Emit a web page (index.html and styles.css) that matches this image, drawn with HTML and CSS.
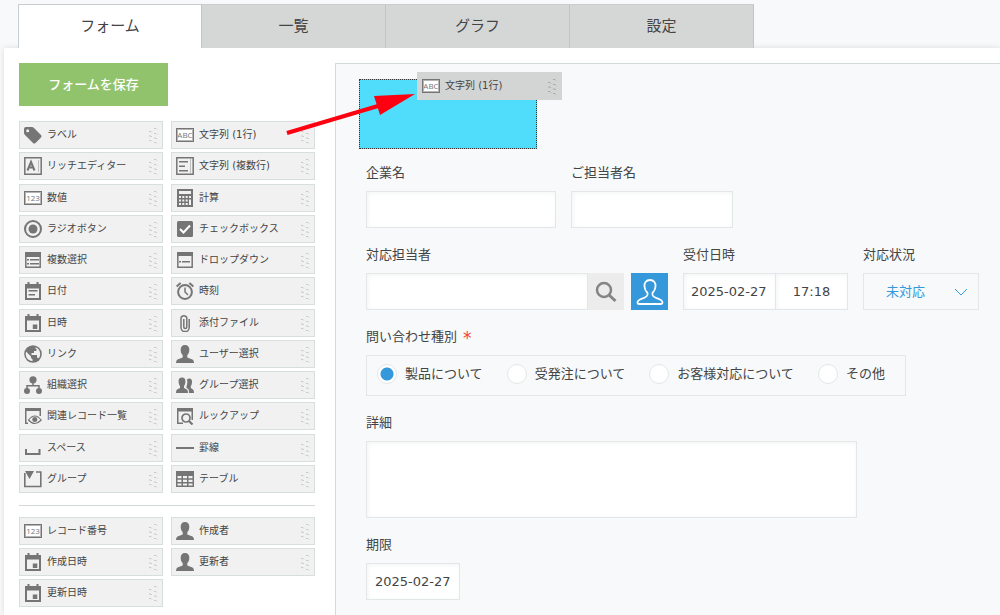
FILE: index.html
```html
<!DOCTYPE html>
<html lang="ja">
<head>
    <meta charset="UTF-8">
    <meta name="viewport" content="width=device-width, initial-scale=1.0">
    <title>フォーム</title>
    <link rel="stylesheet" href="styles.css">
</head>
<body>
    <!-- icon sprite -->
    <svg class="sprite" aria-hidden="true">
        <symbol id="grip" viewBox="0 0 14 22">
            <g fill="none" stroke="currentColor" stroke-width="1">
                <path d="M2 7.500h2l1 1M2 12h2l1 1M2 16.500h2l1 1"/>
                <path d="M7 4.500h2l1 1M7 9.500h2l1 1M7 14h2l1 1M7 18.500h2l1 1"/>
            </g>
        </symbol>
        <symbol id="i-tag" viewBox="0 0 18 18">
            <path fill-rule="evenodd" d="M0 3Q0 1 2 1L8 1Q9 1 10 2L17 9Q18 10 17 11.500L11.500 17Q10 18 9 17L1 9Q0 8 0 7ZM3.700 3.200A1.500 1.500 0 1 0 3.700 6.200A1.500 1.500 0 1 0 3.700 3.200Z"/>
        </symbol>
        <symbol id="i-rich" viewBox="0 0 18 18">
            <path fill="none" stroke="currentColor" stroke-width="1.500" d="M.8.8h16.400v16.400H.8z"/>
            <path fill="none" stroke="currentColor" stroke-width="2" d="M3.500 13.500L7 5l3.500 8.500M5 10.500h4"/>
            <path opacity=".4" d="M14 3h1v12h-1z"/>
        </symbol>
        <symbol id="i-multi" viewBox="0 0 18 18">
            <path fill="none" stroke="currentColor" stroke-width="1.500" d="M.8.8h16.400v16.400H.8z"/>
            <path d="M3 4h9v1.500H3zM3 8.500h6V10H3zM3 13h9v1.500H3z"/>
            <path opacity=".4" d="M14 2h1v14h-1z"/>
        </symbol>
        <symbol id="i-calc" viewBox="0 0 18 18">
            <path fill-rule="evenodd" d="M1 0h16v18H1zM3 2v3h12V2zM3 7v2h2V7zM6.300 7v2h2V7zM9.700 7v2h2V7zM13 7v2h2V7zM3 10.500v2h2v-2zM6.300 10.500v2h2v-2zM9.700 10.500v2h2v-2zM3 14v2h2v-2zM6.300 14v2h2v-2zM9.700 14v2h2v-2zM13 10.500V16h2v-5.500z"/>
        </symbol>
        <symbol id="i-radio" viewBox="0 0 18 18">
            <circle cx="9" cy="9" r="8" fill="none" stroke="currentColor" stroke-width="2"/>
            <circle cx="9" cy="9" r="4.500"/>
        </symbol>
        <symbol id="i-check" viewBox="0 0 18 18">
            <rect x="1" y="1" width="16" height="16" rx="1.500"/>
            <path fill="none" stroke="#fff" stroke-width="2" d="M4 9l3.500 3.500L14 5.500"/>
        </symbol>
        <symbol id="i-list" viewBox="0 0 18 18">
            <path fill="none" stroke="currentColor" stroke-width="1.500" d="M1.800 1.800h14.400v14.400H1.800z"/>
            <path d="M1 1h16v5H1zM3 8h2v1.500H3zM6 8h9v1.500H6zM3 12h2v1.500H3zM6 12h9v1.500H6z"/>
        </symbol>
        <symbol id="i-drop" viewBox="0 0 18 18">
            <path fill="none" stroke="currentColor" stroke-width="1.500" d="M1.800 1.800h14.400v14.400H1.800z"/>
            <path d="M1 1h16v4H1zM3 10h2v1.500H3zM6 10h8v1.500H6z"/>
        </symbol>
        <symbol id="i-date" viewBox="0 0 18 18">
            <path fill-rule="evenodd" d="M3.500 0h2v2h7V0h2v2H17v16H1V2h2.500zM3 6.500V16h12V6.500zM4.500 8h9v1.500h-9zM4.500 12H11v1.500H4.500z"/>
        </symbol>
        <symbol id="i-datetime" viewBox="0 0 18 18">
            <path fill-rule="evenodd" d="M3.500 0h2v2h7V0h2v2H17v16H1V2h2.500zM3 6.500V16h12V6.500zM8.800 10.500h4.500V15H8.800z"/>
        </symbol>
        <symbol id="i-clock" viewBox="0 0 18 18">
            <g fill="none" stroke="currentColor" stroke-width="2">
                <circle cx="9" cy="10" r="6.900"/>
                <path stroke-width="1.500" d="M9 5.500V10l3 3"/>
                <path d="M.6 4.500L4.600 1M17.400 4.500L13.400 1"/>
            </g>
        </symbol>
        <symbol id="i-clip" viewBox="0 0 18 18">
            <path fill="none" stroke="currentColor" stroke-width="1.500" d="M13.200 5v8.500a4 4 0 0 1-8.200 0V4a3 3 0 0 1 5.800 0v9a1.500 1.500 0 0 1-3 0V5"/>
        </symbol>
        <symbol id="i-globe" viewBox="0 0 18 18">
            <circle cx="9" cy="9" r="8.800"/>
            <path fill="#f1f1f1" d="M2 6.500L7 11.500V13l1.500 1.200v2Q3 15.500 2 11Q1.500 8.500 2 6.500ZM11.500 2.200Q16 4 16.200 9Q16 11.500 15 13.200L13 12.500V10H7.500V8H10V6h2Q13 5.500 12.500 4L11.500 3.500Z"/>
        </symbol>
        <symbol id="i-user" viewBox="0 0 18 18">
            <path d="M9 0C12 0 13.500 2 13.300 5C13.200 7.500 12.500 9 11.300 10V12.500L16.500 14.500Q18 15.200 18 18H0Q0 15.200 1.500 14.500L6.700 12.500V10C5.500 9 4.800 7.500 4.700 5C4.500 2 6 0 9 0Z"/>
        </symbol>
        <symbol id="i-org" viewBox="0 0 18 18">
            <circle cx="9" cy="3.800" r="3.600"/>
            <circle cx="3" cy="15" r="3"/>
            <circle cx="15" cy="15" r="3"/>
            <path fill="none" stroke="currentColor" stroke-width="1.500" d="M9 6v3.500M3 13V9.800h12V13"/>
        </symbol>
        <symbol id="i-group-user" viewBox="0 0 18 18">
            <path d="M6 1.500C8.500 1.500 9.500 3 9.400 5.500C9.300 7.500 8.800 9 8 10V12L11 13.500Q12 14 12 17H0Q0 14 1 13.500L4 12V10C3.200 9 2.700 7.500 2.600 5.500C2.500 3 3.500 1.500 6 1.500Z"/>
            <path d="M11 3.500Q12 2.500 13.300 2.500C15.500 2.500 16.300 4.500 16 6.500Q15.800 9 14.800 10V12L17 13.500Q18 14 18 17H13Q13.200 13.500 12 12.800L10.500 12V10.500Q11.500 8 11.300 5.500Z"/>
        </symbol>
        <symbol id="i-related" viewBox="0 0 18 18">
            <path d="M1 1h16v3H1zM1 1h1.500v16H1zM1 15.500h3V17H1zM15.500 1H17v8h-1.500z"/>
            <path fill="none" stroke="currentColor" stroke-width="1.200" d="M4.500 13Q10.800 5 17.200 13Q10.800 20 4.500 13Z"/>
            <circle cx="10.800" cy="12.500" r="2.500"/>
        </symbol>
        <symbol id="i-lookup" viewBox="0 0 18 18">
            <path d="M1 1h16v3.500H1zM1 1h1.500v16H1zM1 15.500h6V17H1zM15.500 1H17v12h-1.500z"/>
            <circle cx="10" cy="11" r="4" fill="none" stroke="currentColor" stroke-width="1.700"/>
            <path fill="none" stroke="currentColor" stroke-width="2.200" d="M13 14l3.500 3.500"/>
        </symbol>
        <symbol id="i-space" viewBox="0 0 18 18">
            <path fill="none" stroke="currentColor" stroke-width="2" d="M2 10v5h13.500v-5"/>
        </symbol>
        <symbol id="i-line" viewBox="0 0 18 18">
            <path d="M0 8h18v2H0z"/>
        </symbol>
        <symbol id="i-group" viewBox="0 0 18 18">
            <path d="M1 1h9L5.500 9z"/>
            <path fill="none" stroke="currentColor" stroke-width="1.600" d="M.8 3v13.500h16V2H12"/>
        </symbol>
        <symbol id="i-table" viewBox="0 0 18 18">
            <path fill-rule="evenodd" d="M0 1h18v16H0zM1.500 6v2.300h4V6zM7 6v2.300h4V6zM12.500 6v2.300h4V6zM1.500 9.700V12h4V9.700zM7 9.700V12h4V9.700zM12.500 9.700V12h4V9.700zM1.500 13.400v2.200h4v-2.200zM7 13.400v2.200h4v-2.200zM12.500 13.400v2.200h4v-2.200z"/>
        </symbol>
    </svg>

    <nav class="tabs">
        <a class="tab active" href="#">フォーム</a>
        <a class="tab" href="#">一覧</a>
        <a class="tab" href="#">グラフ</a>
        <a class="tab" href="#">設定</a>
    </nav>

    <main class="panel">
        <aside class="sidebar">
            <button class="save" type="button">フォームを保存</button>

            <ul class="parts parts-main">
                <li class="part" draggable="true"><svg class="icon"><use href="#i-tag"/></svg><span>ラベル</span><svg class="grip"><use href="#grip"/></svg></li>
                <li class="part" draggable="true"><span class="text-icon">ABC</span><span>文字列 (1行)</span><svg class="grip"><use href="#grip"/></svg></li>
                <li class="part" draggable="true"><svg class="icon"><use href="#i-rich"/></svg><span>リッチエディター</span><svg class="grip"><use href="#grip"/></svg></li>
                <li class="part" draggable="true"><svg class="icon"><use href="#i-multi"/></svg><span>文字列 (複数行)</span><svg class="grip"><use href="#grip"/></svg></li>
                <li class="part" draggable="true"><span class="text-icon">123</span><span>数値</span><svg class="grip"><use href="#grip"/></svg></li>
                <li class="part" draggable="true"><svg class="icon"><use href="#i-calc"/></svg><span>計算</span><svg class="grip"><use href="#grip"/></svg></li>
                <li class="part" draggable="true"><svg class="icon"><use href="#i-radio"/></svg><span>ラジオボタン</span><svg class="grip"><use href="#grip"/></svg></li>
                <li class="part" draggable="true"><svg class="icon"><use href="#i-check"/></svg><span>チェックボックス</span><svg class="grip"><use href="#grip"/></svg></li>
                <li class="part" draggable="true"><svg class="icon"><use href="#i-list"/></svg><span>複数選択</span><svg class="grip"><use href="#grip"/></svg></li>
                <li class="part" draggable="true"><svg class="icon"><use href="#i-drop"/></svg><span>ドロップダウン</span><svg class="grip"><use href="#grip"/></svg></li>
                <li class="part" draggable="true"><svg class="icon"><use href="#i-date"/></svg><span>日付</span><svg class="grip"><use href="#grip"/></svg></li>
                <li class="part" draggable="true"><svg class="icon"><use href="#i-clock"/></svg><span>時刻</span><svg class="grip"><use href="#grip"/></svg></li>
                <li class="part" draggable="true"><svg class="icon"><use href="#i-datetime"/></svg><span>日時</span><svg class="grip"><use href="#grip"/></svg></li>
                <li class="part" draggable="true"><svg class="icon"><use href="#i-clip"/></svg><span>添付ファイル</span><svg class="grip"><use href="#grip"/></svg></li>
                <li class="part" draggable="true"><svg class="icon"><use href="#i-globe"/></svg><span>リンク</span><svg class="grip"><use href="#grip"/></svg></li>
                <li class="part" draggable="true"><svg class="icon"><use href="#i-user"/></svg><span>ユーザー選択</span><svg class="grip"><use href="#grip"/></svg></li>
                <li class="part" draggable="true"><svg class="icon"><use href="#i-org"/></svg><span>組織選択</span><svg class="grip"><use href="#grip"/></svg></li>
                <li class="part" draggable="true"><svg class="icon"><use href="#i-group-user"/></svg><span>グループ選択</span><svg class="grip"><use href="#grip"/></svg></li>
                <li class="part" draggable="true"><svg class="icon"><use href="#i-related"/></svg><span>関連レコード一覧</span><svg class="grip"><use href="#grip"/></svg></li>
                <li class="part" draggable="true"><svg class="icon"><use href="#i-lookup"/></svg><span>ルックアップ</span><svg class="grip"><use href="#grip"/></svg></li>
                <li class="part" draggable="true"><svg class="icon"><use href="#i-space"/></svg><span>スペース</span><svg class="grip"><use href="#grip"/></svg></li>
                <li class="part" draggable="true"><svg class="icon"><use href="#i-line"/></svg><span>罫線</span><svg class="grip"><use href="#grip"/></svg></li>
                <li class="part" draggable="true"><svg class="icon"><use href="#i-group"/></svg><span>グループ</span><svg class="grip"><use href="#grip"/></svg></li>
                <li class="part" draggable="true"><svg class="icon"><use href="#i-table"/></svg><span>テーブル</span><svg class="grip"><use href="#grip"/></svg></li>
            </ul>

            <hr class="divider">

            <ul class="parts">
                <li class="part" draggable="true"><span class="text-icon">123</span><span>レコード番号</span><svg class="grip"><use href="#grip"/></svg></li>
                <li class="part" draggable="true"><svg class="icon"><use href="#i-user"/></svg><span>作成者</span><svg class="grip"><use href="#grip"/></svg></li>
                <li class="part" draggable="true"><svg class="icon"><use href="#i-datetime"/></svg><span>作成日時</span><svg class="grip"><use href="#grip"/></svg></li>
                <li class="part" draggable="true"><svg class="icon"><use href="#i-user"/></svg><span>更新者</span><svg class="grip"><use href="#grip"/></svg></li>
                <li class="part" draggable="true"><svg class="icon"><use href="#i-datetime"/></svg><span>更新日時</span><svg class="grip"><use href="#grip"/></svg></li>
            </ul>
        </aside>

        <form class="canvas">
            <div class="drop-zone">
                <div class="part dragging"><span class="text-icon">ABC</span><span>文字列 (1行)</span><svg class="grip"><use href="#grip"/></svg></div>
                <svg class="arrow" viewBox="0 0 132 44" aria-hidden="true">
                    <path fill="none" stroke="#fe0010" stroke-width="4" d="M3 40L94 13"/>
                    <path fill="#fe0010" d="M131 1L90 3l6 19z"/>
                </svg>
            </div>

            <div class="fields">
                <div class="row">
                    <div class="field">
                        <label class="label" for="company">企業名</label>
                        <input class="box company" type="text" id="company">
                    </div>
                    <div class="field">
                        <label class="label" for="person">ご担当者名</label>
                        <input class="box person" type="text" id="person">
                    </div>
                </div>

                <div class="row">
                    <div class="field">
                        <label class="label" for="assignee">対応担当者</label>
                        <div class="group">
                            <input class="box assignee" type="text" id="assignee">
                            <button class="search" type="button" aria-label="検索">
                                <svg width="24" height="24" viewBox="0 0 24 24" fill="none" stroke="#848484" stroke-width="2.500">
                                    <circle cx="10" cy="10" r="7"/>
                                    <path stroke-width="3" d="M15 15l6.500 6"/>
                                </svg>
                            </button>
                            <button class="pick-user" type="button" aria-label="ユーザー選択">
                                <svg width="28" height="28" viewBox="0 0 28 28" fill="none" stroke="#fff" stroke-width="1.800" stroke-linejoin="round">
                                    <path d="M14 2C18 2 20 5 19.500 8.500C19.300 11.500 18 13.500 16.500 15C16 18 17 18.800 20 19.800C24 21 26.500 22 26.500 24.500Q26.500 26 25 26H3Q1.500 26 1.500 24.500C1.500 22 4 21 8 19.800C11 18.800 12 18 11.500 15C10 13.500 8.700 11.500 8.500 8.500C8 5 10 2 14 2Z"/>
                                </svg>
                            </button>
                        </div>
                    </div>
                    <div class="field">
                        <label class="label" for="received-date">受付日時</label>
                        <div class="group">
                            <input class="box date joined" type="text" id="received-date" value="2025-02-27">
                            <input class="box time" type="text" aria-label="時刻" value="17:18">
                        </div>
                    </div>
                    <div class="field">
                        <label class="label" for="status">対応状況</label>
                        <div class="select">
                            <select class="box" id="status">
                                <option>未対応</option>
                            </select>
                            <svg class="chevron" viewBox="0 0 14 8"><path d="M1 1l6 6 6-6"/></svg>
                        </div>
                    </div>
                </div>

                <div class="field">
                    <div class="label" id="kind-label">問い合わせ種別<span class="required">*</span></div>
                    <div class="radios" role="radiogroup" aria-labelledby="kind-label">
                        <label><input type="radio" name="kind" checked>製品について</label>
                        <label><input type="radio" name="kind">受発注について</label>
                        <label><input type="radio" name="kind">お客様対応について</label>
                        <label><input type="radio" name="kind">その他</label>
                    </div>
                </div>

                <div class="field">
                    <label class="label" for="detail">詳細</label>
                    <textarea class="box detail" id="detail"></textarea>
                </div>

                <div class="field">
                    <label class="label" for="limit">期限</label>
                    <input class="box date" type="text" id="limit" value="2025-02-27">
                </div>
            </div>
        </form>
    </main>
</body>
</html>
```

FILE: styles.css
```css
* {
    box-sizing: border-box;
}
body {
    display: flex;
    flex-direction: column;
    min-height: 100vh;
    margin: 0;
    background-color: #f7f9fa;
    color: #444;
    font-family: "DejaVu Sans", "Noto Sans CJK JP", sans-serif;
    font-size: 13px;
    line-height: 20px;
}
input, select, textarea, button {
    margin: 0;
    color: inherit;
    font: inherit;
}
button {
    padding: 0;
    border: none;
    cursor: pointer;
}
.sprite {
    position: absolute;
    width: 0;
    height: 0;
}

/* tabs */
.tabs {
    display: flex;
    padding: 4px 0 0 18px;
}
.tab {
    position: relative;
    width: 184px;
    height: 44px;
    border-top: 1px solid #c8cecf;
    border-right: 1px solid #bfc6c7;
    background-color: #d4d7d6;
    color: #444;
    font-size: 15px;
    line-height: 42px;
    text-align: center;
    text-decoration: none;
}
.tab.active {
    z-index: 1;
    border-left: 1px solid #c8cecf;
    background-color: #fff;
}

/* main panel */
.panel {
    display: flex;
    flex: 1;
    margin-left: 4px;
    background-color: #fff;
    box-shadow: 0 0 6px rgba(0, 0, 0, 0.12);
}
.sidebar {
    flex: none;
    width: 331px;
    padding: 15px 20px 0 15px;
}
.save {
    display: block;
    width: 149px;
    height: 43px;
    background-color: #91c36c;
    color: #fff;
    font-weight: 500;
}
.parts {
    display: grid;
    grid-template-columns: 1fr 1fr;
    gap: 3px 8px;
    margin: 0;
    padding: 0;
    list-style: none;
}
.parts-main {
    align-content: space-between;
    min-height: 372px;
    margin-top: 15px;
}
.part {
    display: flex;
    align-items: center;
    gap: 5px;
    height: 28px;
    padding: 0 1px 0 4px;
    border: 1px solid #d6dede;
    background-color: #f1f1f1;
    font-size: 10px;
    line-height: 26px;
    white-space: nowrap;
    cursor: move;
}
.icon {
    flex: none;
    width: 18px;
    height: 18px;
    color: #757575;
    fill: currentColor;
}
.text-icon {
    flex: none;
    width: 18px;
    height: 14px;
    border: 1px solid #757575;
    outline: 1px solid #b5b5b5;
    outline-offset: -2px;
    background-color: #fff;
    color: #757575;
    font-family: "Liberation Sans Narrow", "Open Sans", sans-serif;
    font-size: 8px;
    line-height: 12px;
    text-align: center;
}
.grip {
    width: 14px;
    height: 22px;
    margin-left: auto;
    color: #c6caca;
}
.divider {
    margin: 12px 0 11px;
    border: none;
    border-top: 1px solid #d3d8d8;
}

/* form canvas */
.canvas {
    flex: 1;
    margin-top: 15px;
    padding: 15px 20px 15px 23px;
    border-top: 1px solid #d3dadb;
    border-left: 1px solid #d3dadb;
    background-color: #f7f9fa;
}
.drop-zone {
    position: relative;
    width: 178px;
    height: 70px;
    border: 1px dotted #333;
    background-color: #50ddfb;
}
.dragging {
    position: absolute;
    top: -8px;
    left: 57px;
    width: 145px;
    border-color: #d3d4d4;
    background-color: #d3d4d4;
}
.dragging .grip {
    color: #aaa;
}
.arrow {
    position: absolute;
    top: 13px;
    left: -76px;
    width: 132px;
    height: 44px;
    pointer-events: none;
}
.fields {
    display: flex;
    flex-direction: column;
    gap: 16px;
    padding: 13px 0 0 7px;
}
.row {
    display: flex;
    gap: 15px;
}
.field {
    display: flex;
    flex-direction: column;
    align-items: flex-start;
    gap: 7px;
}
.label {
    height: 22px;
    line-height: 22px;
}
.required {
    margin-left: 6px;
    color: #f44336;
    font-size: 17px;
    line-height: 1;
    vertical-align: -3px;
}
.group {
    display: flex;
}
.box {
    height: 37px;
    padding: 0 8px;
    border: 1px solid #e3e7e8;
    border-radius: 0;
    background-color: #fff;
    box-shadow: inset 1px 1px 5px #f2f4f5;
}
.company {
    width: 190px;
}
.person {
    width: 162px;
}
.assignee {
    width: 222px;
}
.date {
    width: 94px;
}
.joined {
    width: 92px;
    padding: 0 7px;
    border-right: none;
}
.time {
    width: 73px;
    text-align: center;
}
.search, .pick-user {
    display: flex;
    align-items: center;
    justify-content: center;
    width: 37px;
    height: 37px;
}
.search {
    width: 36px;
    background-color: #ececec;
}
.pick-user {
    margin-left: 7px;
    background-color: #3498db;
}
.select {
    position: relative;
}
.select .box {
    width: 116px;
    padding: 0 22px;
    background-color: transparent;
    box-shadow: none;
    color: #3498db;
    appearance: none;
}
.chevron {
    position: absolute;
    top: 15px;
    right: 11px;
    width: 14px;
    height: 8px;
    fill: none;
    stroke: #3498db;
    pointer-events: none;
}
.radios {
    display: flex;
    align-items: center;
    gap: 24px;
    height: 41px;
    padding: 0 20px 4px 10px;
    border: 1px solid #e3e7e8;
}
.radios label {
    display: flex;
    align-items: center;
    gap: 8px;
}
.radios input {
    width: 20px;
    height: 20px;
    border: 1px solid #e3e7e8;
    border-radius: 50%;
    background-color: #fff;
    appearance: none;
}
.radios input:checked {
    background-image: radial-gradient(circle, #3498db 6px, transparent 7px);
}
.detail {
    width: 491px;
    height: 77px;
    resize: none;
}
```
